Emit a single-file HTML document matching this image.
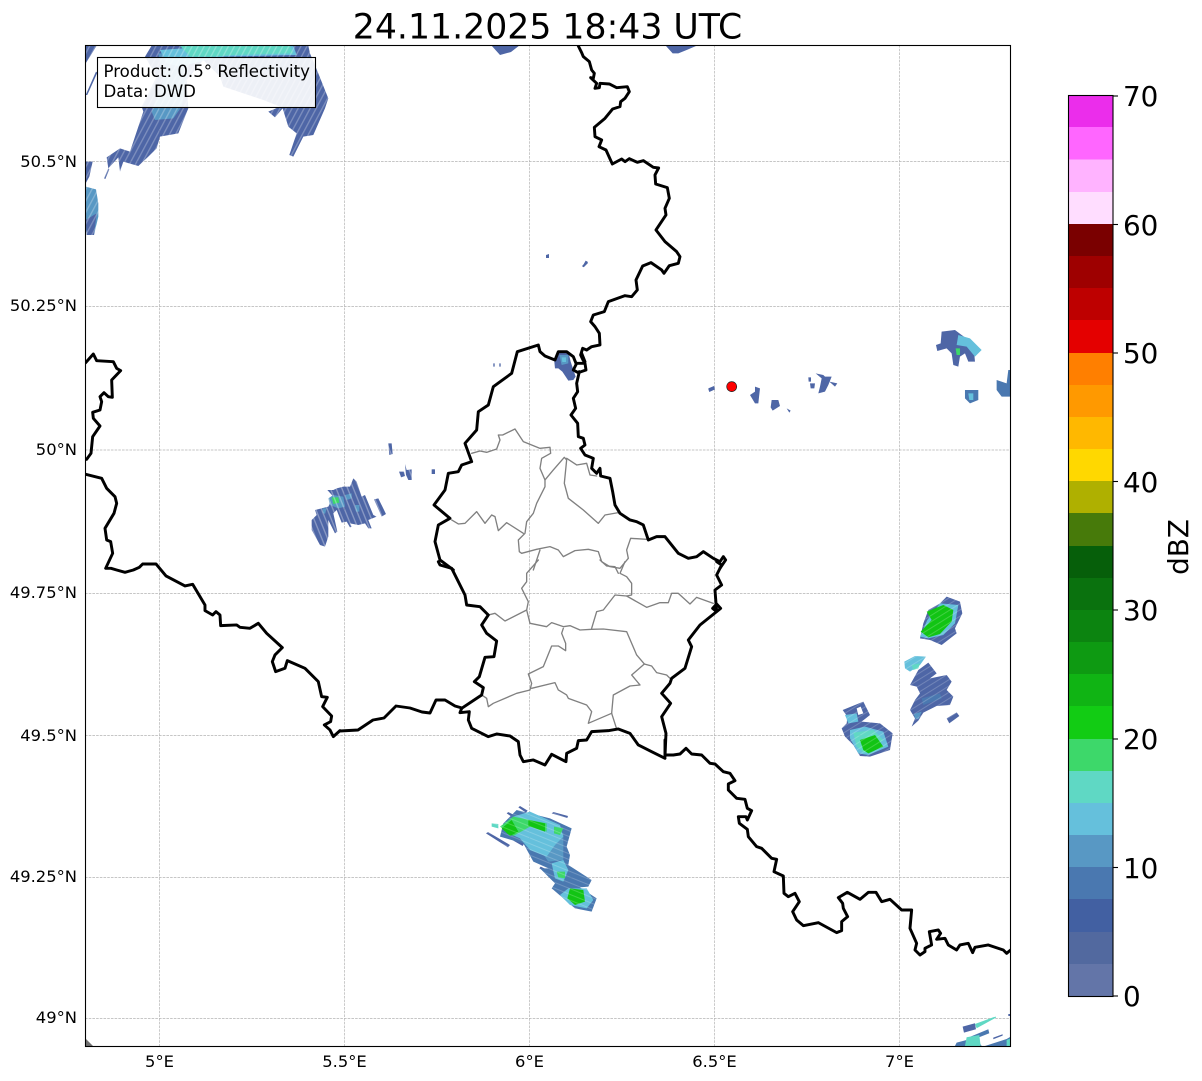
<!DOCTYPE html>
<html><head><meta charset="utf-8"><title>Radar</title>
<style>
html,body{margin:0;padding:0;background:#fff;width:1202px;height:1081px;overflow:hidden}
svg{display:block}
text{font-family:"DejaVu Sans","Liberation Sans",sans-serif;fill:#000}
.b{fill:none;stroke:#000;stroke-width:8.8;stroke-linejoin:round;stroke-linecap:round}
.i{fill:none;stroke:#808080;stroke-width:4;stroke-linejoin:round;stroke-linecap:round}
.d{fill:#4e66a6}.m{fill:#4a78b0}.c{fill:#5898c4}.l{fill:#65c0dc}.t{fill:#60d8c4}.g{fill:#3dd86a}.G{fill:#12c414}
.grid line{stroke:#b4b4b4;stroke-width:.7;stroke-dasharray:2.6 1.1}
</style></head>
<body>
<svg width="1202" height="1081" viewBox="0 0 1202 1081" xmlns="http://www.w3.org/2000/svg">
<defs>
<clipPath id="ax"><rect x="85.5" y="45.5" width="925" height="1001"/></clipPath>
<pattern id="p1" patternUnits="userSpaceOnUse" width="16" height="16" patternTransform="rotate(-62)"><rect width="16" height="16" fill="#fff"/><rect width="16" height="4" fill="#bbb"/></pattern>
<pattern id="p2" patternUnits="userSpaceOnUse" width="16" height="16" patternTransform="rotate(68)"><rect width="16" height="16" fill="#fff"/><rect width="16" height="4" fill="#aaa"/></pattern>
<pattern id="p3" patternUnits="userSpaceOnUse" width="16" height="16" patternTransform="rotate(22)"><rect width="16" height="16" fill="#fff"/><rect width="16" height="3" fill="#ccc"/></pattern>
<pattern id="p4" patternUnits="userSpaceOnUse" width="16" height="16" patternTransform="rotate(-32)"><rect width="16" height="16" fill="#fff"/><rect width="16" height="3" fill="#ccc"/></pattern>
<mask id="m1" maskUnits="userSpaceOnUse" x="-100" y="-100" width="1500" height="1500"><rect x="-100" y="-100" width="1500" height="1500" fill="url(#p1)"/></mask>
<mask id="m2" maskUnits="userSpaceOnUse" x="-100" y="-100" width="1500" height="1500"><rect x="-100" y="-100" width="1500" height="1500" fill="url(#p2)"/></mask>
<mask id="m3" maskUnits="userSpaceOnUse" x="-100" y="-100" width="1500" height="1500"><rect x="-100" y="-100" width="1500" height="1500" fill="url(#p3)"/></mask>
<mask id="m4" maskUnits="userSpaceOnUse" x="-100" y="-100" width="1500" height="1500"><rect x="-100" y="-100" width="1500" height="1500" fill="url(#p4)"/></mask>
</defs>
<text x="547.5" y="38.5" font-size="34.7" text-anchor="middle">24.11.2025 18:43 UTC</text>
<g class="grid">
<line x1="159.5" y1="45" x2="159.5" y2="1046"/><line x1="344.5" y1="45" x2="344.5" y2="1046"/><line x1="529.5" y1="45" x2="529.5" y2="1046"/><line x1="714.5" y1="45" x2="714.5" y2="1046"/><line x1="899.5" y1="45" x2="899.5" y2="1046"/>
<line x1="85" y1="161.5" x2="1010" y2="161.5"/><line x1="85" y1="306.5" x2="1010" y2="306.5"/><line x1="85" y1="450" x2="1010" y2="450"/><line x1="85" y1="593.5" x2="1010" y2="593.5"/><line x1="85" y1="735.5" x2="1010" y2="735.5"/><line x1="85" y1="877.5" x2="1010" y2="877.5"/><line x1="85" y1="1018.5" x2="1010" y2="1018.5"/>
</g>
<g clip-path="url(#ax)">
<!-- radar top-left -->
<g transform="translate(80,40) scale(.3333)" mask="url(#m1)">
<path class="d" d="M195 50L215 17H685L690 40L715 100L745 175L735 205L700 285L670 290L640 350L628 345L650 280L625 260L608 205L585 232L565 215L600 200L550 180L430 140L420 110L370 60L320 120L325 205L295 280L240 290L230 325L205 350L175 378L130 365L120 395L115 352L85 385L80 352L120 325L150 335L165 290L190 215L185 200L230 110Z"/>
<path class="c" d="M235 40L330 40L320 120L305 200L280 235L225 240L215 215L250 120Z"/>
<path class="l" d="M240 30L420 17L640 17L650 45L430 50L380 60L300 80L260 70Z"/>
<path class="t" d="M300 17H630L640 40L460 45L400 50L330 50Z"/>
<path class="d" d="M17 17H50L30 50L17 70ZM17 165L48 95L52 98L22 165ZM17 365H38L28 410L17 430ZM72 415L85 385L88 388L76 417Z"/>
<path class="c" d="M17 440L48 448L55 490L55 530L42 585H20L17 560Z"/>
<path class="d" d="M17 540L50 520L42 585H20Z"/>
</g>
<!-- radar top edge -->
<g transform="translate(550,40) scale(.3333)">
<path class="d" d="M348 18H438L410 30L385 40L368 40ZM97 680L107 662L111 665L101 682Z"/>
</g>
<path class="d" d="M491 45H520L511 52L500 55ZM669 45H695L684 50L676 53ZM546 255L549 254L549 258L546 258ZM582 266L587 261L588 263L584 267Z"/>
<!-- lux north -->
<g transform="translate(430,340) scale(.3333)">
<path class="d" d="M373 65L385 35L415 35L422 65L437 110L430 120L415 122L397 95L385 85L375 85ZM190 70h4v10h-4zM208 70h4v10h-4zM5 388h10v14h-10zM835 145L852 138L855 148L838 156Z"/>
<path class="c" d="M388 45H415L415 70L395 75Z"/><path class="l" d="M395 52H408V66H397Z"/>
</g>
<!-- mid-left blob -->
<g transform="translate(300,440) scale(.3333)" mask="url(#m2)">
<path class="d" d="M45 210L85 200L100 170L82 150L100 150L110 145L130 140L150 140L160 115L170 125L185 170L195 165L220 225L230 230L205 240L215 265L205 265L195 250L175 255L150 250L155 260L150 262L140 245L125 248L110 210L100 220L112 275L105 280L85 240L85 290L75 320L60 315L35 270L35 240L50 225Z"/>
<path class="d" d="M222 178L235 175L258 222L245 230ZM265 10H275L278 42L268 45ZM297 95H312L315 108L303 112ZM315 72L320 90L335 88L335 120L325 120L318 105ZM397 88H403L405 100L398 100Z"/>
<path class="c" d="M85 175L100 165L130 170L135 200L115 205L90 195ZM135 165L155 160L155 175L140 180ZM165 195H178V215H168ZM68 205H80L75 222L68 218Z"/>
<path class="g" d="M95 172H115L118 188L100 192Z"/>
</g>
<!-- bottom blob -->
<g transform="translate(480,800) scale(.3333)" mask="url(#m3)">
<path class="d" d="M18 100L24 96L90 135L84 142ZM80 40L85 36L108 48L104 56ZM115 22L120 18L143 32L138 38ZM215 40L220 36L264 48L262 54ZM100 122L106 116L133 130L128 138ZM178 205L182 200L215 215L212 222Z"/>
<path class="m" d="M70 70L110 30L210 55L275 85L260 140L270 165L265 195L335 240L325 260L300 262L350 295L335 335L285 325L215 265L225 250L180 205L205 205L160 185L130 130L60 110Z"/>
<path class="c" d="M160 120L250 100L250 180L205 185Z"/>
<path class="l" d="M100 50L150 35L240 75L250 110L225 135L200 170L150 150L120 115L75 95Z"/>
<path class="g" d="M60 80L100 50L200 70L200 95L150 80L100 108Z"/>
<path class="t" d="M35 70L55 72L55 85L35 80Z"/>
<path class="g" d="M222 80L250 85L240 105L222 100Z"/>
<path class="G" d="M65 85L95 60L115 95L90 108ZM145 60L195 70L195 95L145 78Z"/>
<path class="l" d="M215 190L250 180L265 210L250 245L225 235ZM265 265L320 265L340 300L320 325L270 315L240 285Z"/>
<path class="g" d="M230 215H255V235L235 232Z"/>
<path class="G" d="M270 265L310 270L315 305L285 315L262 295Z"/>
</g>
<!-- right blobs -->
<g transform="translate(840,590) scale(.3333)" mask="url(#m4)">
<path class="d" d="M320 20L360 35L367 70L345 115L350 130L305 165L270 150L240 145L250 100L265 60L300 40Z"/>
<path class="l" d="M300 40L355 45L345 100L310 135L265 145L240 140L262 90Z"/>
<path class="G" d="M260 65L310 45L340 60L335 95L300 132L265 142L242 125L275 90Z"/>
<path class="d" d="M210 285L235 240L265 218L290 250L270 265L320 255L335 275L320 300L340 320L330 345L290 348L250 368L235 392L215 410L225 385L210 360L225 330L240 310L230 290Z"/>
<path class="l" d="M193 215L225 198L258 200L240 225L210 245L195 235Z"/>
<path class="t" d="M215 225L240 220L235 235L220 240Z"/>
<path class="m" d="M245 325L300 310L305 325L250 345Z"/>
<path class="c" d="M222 372L245 365L235 388L225 385Z"/>
<path class="d" d="M320 385L350 367L358 378L328 400Z"/>
<path class="d" d="M8 360L70 335L90 375L65 395L120 400L158 430L150 480L90 500L60 498L40 465L15 440L5 415L20 400L22 380Z"/>
<path fill="#fff" d="M50 355L62 350L70 370L55 375Z"/>
<path class="l" d="M15 375L50 370L55 395L25 400ZM30 420L75 410L130 425L145 470L85 495L55 490L30 445Z"/>
<path class="t" d="M40 428L100 420L130 450L75 490L50 470Z"/>
<path class="G" d="M60 450L105 435L130 470L85 490L70 480Z"/>
</g>
<g transform="translate(700,320) scale(.3333)">
<path class="d" d="M25 208L42 200L44 208L28 215ZM165 200L180 205L175 250L165 250L150 225L165 215ZM215 240H235L240 258L218 272L212 262ZM260 265L272 272L268 278ZM347 160L370 165L375 170L395 170L385 195L375 215L355 220L360 200L365 175ZM330 190H345L343 205H332ZM325 172H333V185H326ZM388 185L412 190L405 200Z"/>
<path class="d" d="M725 35L765 30L785 45L820 70L825 125L805 125L795 100L780 110L775 140L760 135L755 100L740 85L712 93L708 75L722 70Z"/>
<path class="l" d="M775 45L810 55L845 90L825 110L800 80L770 75Z"/>
<path class="g" d="M767 85H780V105H770Z"/>
<path class="m" d="M795 210H835V240L810 250L795 235Z"/><path class="l" d="M805 220H820V240H808Z"/>
<path class="m" d="M925 150H935V230H905L890 210V180L920 190Z"/>
</g>
<g transform="translate(660,740) scale(.3333)">
<path class="d" d="M908 860L945 850L948 868L912 878Z"/>
<path class="t" d="M945 852L1000 832L1008 830V833L950 865Z"/>
<path class="m" d="M920 895L985 868L988 880L950 895L965 918H885L890 908L920 900Z"/>
<path class="t" d="M920 892L958 885L962 918H915Z"/>
<path class="d" d="M1000 893L1028 883V887L1000 898ZM1045 822H1052V828H1045Z"/>
<path class="m" d="M975 918L1040 897L1052 890V918Z"/>
<path class="t" d="M1040 900L1052 895V918H1040Z"/>
</g>
<path fill="#707070" d="M85 1038L93 1046H85Z"/>
<!-- interior grey borders -->
<g transform="translate(430,340) scale(.3333)">
<path class="i" d="M125 340L150 333L170 337L200 327L210 300L205 285L218 285L255 267L280 305L330 325L360 322L362 340L335 355L330 385L345 420L370 390L403 352L410 360L403 430L415 475L460 510L505 550L525 525L565 518"/>
<path class="i" d="M345 420L345 440L320 490L310 520L290 545L285 580L265 600L268 635L275 640L320 628L360 620L385 630L400 650L435 632L475 628L505 635L515 665L540 680L570 685L595 655L590 630L602 595L650 598"/>
<path class="i" d="M410 355L440 375L470 370L480 405L500 408"/>
<path class="i" d="M65 540L85 552L105 550L140 515L165 550L185 525L195 530L205 572L230 548L280 580"/>
<path class="i" d="M330 630L310 690"/>
</g>
<g transform="translate(430,560) scale(.3333)">
<path class="i" d="M325 0L290 40L290 65L275 85L295 125L290 150L225 183L195 160L175 165"/>
<path class="i" d="M290 150L300 190L350 200L365 188L400 200L420 197L450 210L485 208L520 207L590 215L620 285L643 312L605 345L630 375L600 378L550 405L545 460L560 507"/>
<path class="i" d="M400 205L395 220L407 250L407 272L385 258L365 258L340 320L295 342L305 370L300 390L260 400L190 430L175 440L170 415L155 405"/>
<path class="i" d="M305 385L375 368L385 390L410 405L415 415L470 435L485 455L475 490L545 460"/>
<path class="i" d="M485 205L500 155L520 150L555 105L590 108L650 142L690 128L715 128L725 100L745 100L780 132L800 112L850 130"/>
<path class="i" d="M643 312L665 318L680 338L710 345L720 355"/>
<path class="i" d="M590 108L605 105L605 70L590 50L570 40L585 5"/>
<path class="i" d="M565 40L555 20L530 18L510 0"/>
</g>
<!-- black borders -->
<g transform="translate(550,40) scale(.3333)">
<path class="b" d="M85 18L95 38L100 50L118 65L125 90L133 100L130 115L122 113L140 130L135 145L148 143L150 130L178 132L200 143L232 140L238 155L225 175L212 185L210 200L188 207L165 235L133 262L135 290L155 300L147 320L168 330L187 372L215 357L225 365L238 356L262 367L280 362L310 382L326 384L315 405L317 432L352 443L358 475L345 505L348 525L318 570L345 605L380 635L390 650L385 670L358 677L342 700L335 690L303 668L278 678L258 720L262 750L245 770L225 767L175 785L163 815L130 825L122 845L135 860L148 880L150 915L125 920L110 930L98 925L92 945L100 962"/>
</g>
<g transform="translate(430,340) scale(.3333)">
<path class="b" d="M455 40L465 65"/>
<path class="b" d="M440 70L465 70L468 90L445 98L430 90Z"/>
<path class="b" d="M448 95L440 130L443 155L430 175L437 205L423 225L443 250L445 290L460 295L465 315L452 325L465 345L490 355L485 385L500 400L510 385L512 408L540 415L548 455L555 495L570 520L600 540L620 545L640 555L655 600L680 590L705 590L745 640L775 655L800 650L820 635L850 655L870 665L880 650L887 660L870 685"/>
<path class="b" d="M438 70L430 50L410 35L385 35L375 60L345 48L330 35L325 15L262 35L245 100L190 140L175 195L145 215L140 270L105 310L125 365L95 375L85 395L55 400L45 450L12 495L60 535L25 555L15 605L30 660L70 690"/>
</g>
<g transform="translate(430,560) scale(.3333)">
<path class="b" d="M25 5L30 15L65 25L105 105L110 135L150 140L175 165L155 195L170 220L200 243L192 290L165 292L148 350L133 365L160 383L155 405L95 445L90 458L118 455L115 480L125 505L175 530L200 522L240 528L265 545L270 585L280 605L310 600L345 615L365 583L408 605L410 580L440 565L445 542L470 540L485 515L535 512L565 507L600 520L625 555L665 575L705 595"/>
<path class="b" d="M705 590L708 520L695 470L722 430L695 400L720 370L725 355L765 325L785 260L775 240L810 195L860 155L848 145L860 132L872 145L860 155L855 90L875 75L860 45L875 15L860 5"/>
</g>
<g transform="translate(80,340) scale(.3333)">
<path class="b" d="M17 68L40 42L50 62L100 65L110 85L122 92L95 120L97 172L85 170L72 158L60 170L65 185L60 210L38 217L40 235L60 258L38 290L33 340L20 358"/>
<path class="b" d="M17 403L65 415L80 445L105 470L110 490L102 520L75 565L80 600L92 605L98 640L77 685L93 685L110 690L135 697L160 690L178 682L188 672L228 672L258 708L315 738L338 733L375 795L375 812L398 825L408 815L420 825L422 857L470 855L480 862L510 865L535 850L560 880L607 923L585 945L577 965L587 995L615 985L622 962L675 985L715 1025L725 1070L742 1072L728 1100L755 1128L752 1145L733 1155L750 1170L760 1190L780 1172"/>
</g>
<path class="b" style="stroke-width:2.9" d="M340 731L358 730L373 720L384 718L396 706L410 708L422 712L430 713L436 700L445 700L455 706L462 708"/>
<g transform="translate(660,740) scale(.3333)">
<path class="b" d="M15 0L15 45L40 45L60 42L78 25L95 42L125 45L150 70L165 72L190 95L210 100L225 122L205 132L205 150L230 175L255 178L262 205L275 212L262 240L258 230L235 230L238 250L262 268L265 290L290 320L305 325L335 355L350 358L342 395L370 408L372 460L385 470L405 460L418 485L398 515L410 540L430 557L475 548L530 578L545 572L545 545L563 530L550 505L548 490L535 473L562 457L600 478L625 457L648 457L665 485L690 478L725 510L755 510L750 565L770 610L765 630L780 645L795 635L795 625L815 615L808 575L835 570L842 580L830 598L855 595L865 615L890 630L900 615L925 610L938 638L945 622L985 615L1030 630L1040 640L1052 630"/>
</g>
</g>
<circle cx="731.7" cy="386.6" r="5" fill="#ff0000" stroke="#222" stroke-width=".7"/>
<rect x="85.5" y="45.5" width="925" height="1001" fill="none" stroke="#000" stroke-width="1.1"/>
<rect x="97.5" y="57.5" width="218" height="50" fill="#fff" fill-opacity=".9" stroke="#000" stroke-width="1.1"/>
<text x="103.5" y="77" font-size="16.6">Product: 0.5° Reflectivity</text>
<text x="103.5" y="97" font-size="16.6">Data: DWD</text>
<!-- axis labels -->
<g font-size="16.35" text-anchor="end">
<text x="77" y="167">50.5°N</text><text x="77" y="311">50.25°N</text><text x="77" y="455">50°N</text><text x="77" y="598">49.75°N</text><text x="77" y="741">49.5°N</text><text x="77" y="882">49.25°N</text><text x="77" y="1023">49°N</text>
</g>
<g font-size="16.35" text-anchor="middle">
<text x="159.5" y="1067">5°E</text><text x="344.5" y="1067">5.5°E</text><text x="529.5" y="1067">6°E</text><text x="714.5" y="1067">6.5°E</text><text x="899.5" y="1067">7°E</text>
</g>
<!-- colorbar -->
<g shape-rendering="crispEdges">
<rect x="1068.5" y="95" width="44.5" height="32.5" fill="#eb2deb"/>
<rect x="1068.5" y="127" width="44.5" height="32.5" fill="#ff66ff"/>
<rect x="1068.5" y="159.4" width="44.5" height="33" fill="#ffb3ff"/>
<rect x="1068.5" y="192" width="44.5" height="32" fill="#ffddff"/>
<rect x="1068.5" y="224" width="44.5" height="32" fill="#7a0000"/>
<rect x="1068.5" y="256" width="44.5" height="32" fill="#9e0000"/>
<rect x="1068.5" y="288" width="44.5" height="33" fill="#be0000"/>
<rect x="1068.5" y="320" width="44.5" height="33" fill="#e40000"/>
<rect x="1068.5" y="353" width="44.5" height="32" fill="#ff7f00"/>
<rect x="1068.5" y="385" width="44.5" height="32" fill="#ff9900"/>
<rect x="1068.5" y="417" width="44.5" height="32" fill="#ffb800"/>
<rect x="1068.5" y="449" width="44.5" height="32" fill="#ffd800"/>
<rect x="1068.5" y="481" width="44.5" height="33" fill="#afb000"/>
<rect x="1068.5" y="513" width="44.5" height="33" fill="#477a0a"/>
<rect x="1068.5" y="546" width="44.5" height="32" fill="#065f0a"/>
<rect x="1068.5" y="578" width="44.5" height="32" fill="#0a720e"/>
<rect x="1068.5" y="610" width="44.5" height="32" fill="#0c8410"/>
<rect x="1068.5" y="642" width="44.5" height="32" fill="#0e9a12"/>
<rect x="1068.5" y="674" width="44.5" height="33" fill="#10b414"/>
<rect x="1068.5" y="706" width="44.5" height="33" fill="#12cc14"/>
<rect x="1068.5" y="739" width="44.5" height="32" fill="#3dd86a"/>
<rect x="1068.5" y="771" width="44.5" height="32" fill="#5fd8c4"/>
<rect x="1068.5" y="803" width="44.5" height="32" fill="#65c0dc"/>
<rect x="1068.5" y="835" width="44.5" height="32" fill="#5898c4"/>
<rect x="1068.5" y="867" width="44.5" height="32" fill="#4a78b0"/>
<rect x="1068.5" y="899" width="44.5" height="33" fill="#4260a2"/>
<rect x="1068.5" y="932" width="44.5" height="32" fill="#52699f"/>
<rect x="1068.5" y="964" width="44.5" height="32" fill="#6375a8"/>
</g>
<rect x="1068.5" y="95.5" width="44.5" height="901" fill="none" stroke="#000" stroke-width="1.1"/>
<g stroke="#000" stroke-width="1.1">
<line x1="1113" y1="96" x2="1118" y2="96"/><line x1="1113" y1="224.5" x2="1118" y2="224.5"/><line x1="1113" y1="353" x2="1118" y2="353"/><line x1="1113" y1="481.5" x2="1118" y2="481.5"/><line x1="1113" y1="610" x2="1118" y2="610"/><line x1="1113" y1="739" x2="1118" y2="739"/><line x1="1113" y1="867.5" x2="1118" y2="867.5"/><line x1="1113" y1="996" x2="1118" y2="996"/>
</g>
<g font-size="27.8">
<text x="1123" y="106">70</text><text x="1123" y="235">60</text><text x="1123" y="363">50</text><text x="1123" y="492">40</text><text x="1123" y="620">30</text><text x="1123" y="749">20</text><text x="1123" y="878">10</text><text x="1123" y="1006">0</text>
</g>
<text transform="translate(1188,547) rotate(-90)" font-size="27.8" text-anchor="middle">dBZ</text>
</svg>
</body></html>
